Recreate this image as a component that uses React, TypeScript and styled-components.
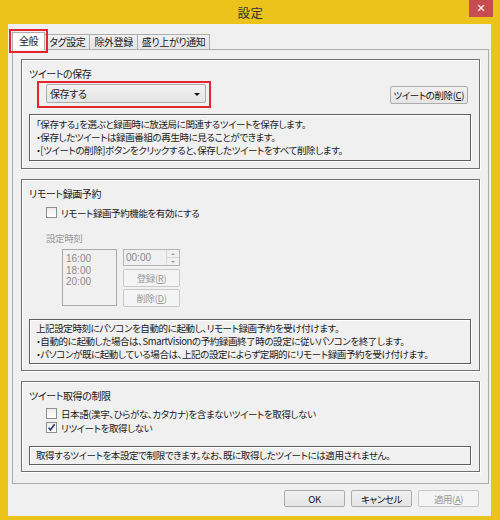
import React from 'react';
import styled, { createGlobalStyle, css } from 'styled-components';

const GlobalStyle = createGlobalStyle`
  html, body {
    margin: 0;
    padding: 0;
    background: #ffffff;
  }
  body {
    font-family: "Noto Sans CJK JP", "Noto Sans", "Liberation Sans", sans-serif;
    font-size: 9.5px;
    letter-spacing: -0.4px;
    font-feature-settings: "palt";
    color: #1a1a1a;
  }
`;

const RED = '#e2262b';

const Window = styled.div`
  width: 500px;
  height: 520px;
  box-sizing: border-box;
  background: #ebc31a;
  padding: 0 9px 7px 8px;
  display: flex;
  flex-direction: column;
`;

const TitleBar = styled.div`
  height: 24px;
  display: grid;
  grid-template-columns: 1fr auto 1fr;
  align-items: start;
  margin-right: -2px;
`;

const Title = styled.div`
  font-size: 12.5px;
  line-height: 26px;
  color: #333;
  letter-spacing: 0.5px;
`;

const CloseButton = styled.div`
  justify-self: end;
  width: 24px;
  height: 17px;
  background: #c74c4f;
  color: #fff;
  display: flex;
  align-items: center;
  justify-content: center;
  font-family: "DejaVu Sans", sans-serif;
  font-size: 11px;
  font-weight: bold;
  letter-spacing: 0;
`;

const Client = styled.div`
  flex: 1;
  background: #f0f0f0;
  padding: 0 2px 9px 4px;
  display: flex;
  flex-direction: column;
`;

const TabStrip = styled.div`
  height: 25px;
  display: flex;
  align-items: flex-end;
  padding-left: 1px;
`;

const Tab = styled.div<{ $active?: boolean; $marked?: boolean }>`
  height: 14px;
  line-height: 14px;
  padding: 0 4px;
  border: 1px solid #acacac;
  border-bottom: none;
  background: linear-gradient(#f0f0f0, #e5e5e5);
  margin-left: -1px;
  font-size: 10px;
  white-space: nowrap;
  ${(p) =>
    p.$active &&
    css`
      height: 17px;
      line-height: 16px;
      background: #ffffff;
      margin-bottom: -1px;
      position: relative;
      z-index: 1;
      padding: 0 6px;
    `}
  ${(p) =>
    p.$marked &&
    css`
      outline: 2px solid ${RED};
      outline-offset: 1px;
    `}
`;

const TabPanel = styled.div`
  flex: 1;
  border: 1px solid #acacac;
  background: #f0f0f0;
  padding: 9px 8px 11px 8px;
  display: flex;
  flex-direction: column;
  gap: 10px;
`;

const Group = styled.div<{ $bottom?: number }>`
  border: 1px solid #6f6f6f;
  box-shadow: 1px 1px 0 #ffffff, inset 1px 1px 0 #ffffff;
  padding: 7px 8px ${(p) => p.$bottom ?? 6}px 7px;
  display: flex;
  flex-direction: column;
`;

const GroupTitle = styled.div`
  line-height: 13px;
  height: 13px;
  font-size: 10px;
`;

const Row = styled.div<{ $indent?: number; $top?: number }>`
  display: flex;
  align-items: center;
  margin-left: ${(p) => p.$indent ?? 0}px;
  margin-top: ${(p) => p.$top ?? 0}px;
`;

const Highlight = styled.div`
  border: 2px solid ${RED};
  padding: 1px 3px 3px 7px;
  display: flex;
`;

const Combo = styled.div`
  width: 150px;
  height: 17px;
  border: 1px solid #acacac;
  border-radius: 2px;
  background: linear-gradient(#f2f2f2, #e4e4e4);
  display: flex;
  align-items: center;
  justify-content: space-between;
  padding: 0 5px 0 3px;
  box-sizing: content-box;
  font-size: 10px;
`;

const ComboArrow = styled.div`
  width: 0;
  height: 0;
  border-left: 3px solid transparent;
  border-right: 3px solid transparent;
  border-top: 3px solid #111;
  margin-top: 1px;
`;

const Button = styled.div<{ $disabled?: boolean; $width?: number }>`
  width: ${(p) => (p.$width ? `${p.$width}px` : 'auto')};
  height: 16px;
  padding: 0 ${(p) => (p.$width ? 0 : 3)}px;
  border: 1px solid #acacac;
  border-radius: 2px;
  background: linear-gradient(#f0f0f0, #e5e5e5);
  display: flex;
  align-items: center;
  justify-content: center;
  white-space: nowrap;
  color: #111;
  ${(p) =>
    p.$disabled &&
    css`
      border-color: #c9c9c9;
      background: #f4f4f4;
      color: #9a9a9a;
    `}
`;

const FooterButton = styled(Button)`
  height: 15px;
`;

const Key = styled.span`
  text-decoration: underline;
  text-underline-offset: 1px;
`;

const InfoBox = styled.div<{ $top?: number; $pad?: number }>`
  margin-top: ${(p) => p.$top ?? 0}px;
  border: 1px solid #5e5e5e;
  box-shadow: inset 1px 1px 0 #ffffff, 1px 1px 0 #ffffff;
  padding: ${(p) => p.$pad ?? 2}px 6px;
  line-height: 13px;
  white-space: nowrap;
`;

const CheckRow = styled.label<{ $top?: number }>`
  display: flex;
  align-items: center;
  gap: 4px;
  margin-left: 17px;
  margin-top: ${(p) => p.$top ?? 0}px;
  height: 13px;
`;

const CheckBox = styled.span`
  width: 9px;
  height: 9px;
  border: 1px solid #8e8f8f;
  background: linear-gradient(#ededed, #ffffff);
  display: flex;
  align-items: center;
  justify-content: center;
`;

const Disabled = styled.div<{ $indent?: number; $top?: number }>`
  color: #9a9a9a;
  margin-left: ${(p) => p.$indent ?? 0}px;
  margin-top: ${(p) => p.$top ?? 0}px;
  line-height: 13px;
`;

const TimeArea = styled.div`
  display: flex;
  gap: 6px;
  margin-left: 33px;
  margin-top: 4px;
  align-items: flex-start;
`;

const ListBox = styled.div`
  width: 55px;
  height: 57px;
  border: 1px solid #a9a9a9;
  padding: 3px 0 0 3px;
  box-sizing: border-box;
  display: flex;
  flex-direction: column;
`;

const ListItem = styled.div`
  height: 11.5px;
  line-height: 11.5px;
  color: #8a8a8a;
  font-size: 10px;
  letter-spacing: 0;
  font-family: "Liberation Sans", sans-serif;
`;

const SideColumn = styled.div`
  display: flex;
  flex-direction: column;
  gap: 2px;
  width: 57px;
`;

const Spin = styled.div`
  height: 15px;
  border: 1px solid #b5b5b5;
  display: flex;
  align-items: stretch;
  margin-bottom: 1px;
  width: 55px;
`;

const SpinText = styled.div`
  flex: 1;
  color: #8a8a8a;
  font-family: "Liberation Sans", sans-serif;
  font-size: 10px;
  letter-spacing: 0;
  line-height: 15px;
  padding-left: 2px;
`;

const SpinArrows = styled.div`
  width: 12px;
  display: flex;
  flex-direction: column;
  border-left: 1px solid #d6d6d6;
`;

const SpinHalf = styled.div<{ $down?: boolean }>`
  flex: 1;
  display: flex;
  align-items: center;
  justify-content: center;
  border-top: ${(p) => (p.$down ? '1px solid #d6d6d6' : 'none')};
  &::after {
    content: '';
    width: 0;
    height: 0;
    border-left: 2px solid transparent;
    border-right: 2px solid transparent;
    ${(p) =>
      p.$down
        ? 'border-top: 2px solid #9a9a9a;'
        : 'border-bottom: 2px solid #9a9a9a;'}
  }
`;

const Footer = styled.div`
  display: flex;
  justify-content: flex-end;
  gap: 6px;
  padding: 6px 10px 0 0;
`;

const Spacer = styled.div`
  flex: 1;
`;

const Check = () => (
  <svg width="9" height="9" viewBox="0 0 9 9">
    <path d="M1.6 4.6 L3.4 7 L7.6 1.2" fill="none" stroke="#1c2f6b" strokeWidth="1.5" />
  </svg>
);

const times = ['16:00', '18:00', '20:00'];

const App: React.FC = () => {
  return (
    <>
      <GlobalStyle />
      <Window>
        <TitleBar>
          <span />
          <Title>設定</Title>
          <CloseButton>✕</CloseButton>
        </TitleBar>
        <Client>
          <TabStrip>
            <Tab $active $marked>全般</Tab>
            <Tab>タグ設定</Tab>
            <Tab>除外登録</Tab>
            <Tab>盛り上がり通知</Tab>
          </TabStrip>
          <TabPanel>
            <Group $bottom={7}>
              <GroupTitle>ツイートの保存</GroupTitle>
              <Row $indent={8} $top={1}>
                <Highlight>
                  <Combo>
                    <span>保存する</span>
                    <ComboArrow />
                  </Combo>
                </Highlight>
                <Spacer />
                <Button style={{ marginRight: 3 }}>
                  ツイートの削除(<Key>C</Key>)
                </Button>
              </Row>
              <InfoBox $top={6} $pad={3}>
                「保存する」を選ぶと録画時に放送局に関連するツイートを保存します。
                <br />
                ・保存したツイートは録画番組の再生時に見ることができます。
                <br />
                ・[ツイートの削除]ボタンをクリックすると、保存したツイートをすべて削除します。
              </InfoBox>
            </Group>

            <Group>
              <GroupTitle>リモート録画予約</GroupTitle>
              <CheckRow $top={6}>
                <CheckBox />
                リモート録画予約機能を有効にする
              </CheckRow>
              <Disabled $indent={17} $top={13}>設定時刻</Disabled>
              <TimeArea>
                <ListBox>
                  {times.map((t) => (
                    <ListItem key={t}>{t}</ListItem>
                  ))}
                </ListBox>
                <SideColumn>
                  <Spin>
                    <SpinText>00:00</SpinText>
                    <SpinArrows>
                      <SpinHalf />
                      <SpinHalf $down />
                    </SpinArrows>
                  </Spin>
                  <Button $disabled $width={55}>
                    登録(<Key>R</Key>)
                  </Button>
                  <Button $disabled $width={55}>
                    削除(<Key>D</Key>)
                  </Button>
                </SideColumn>
              </TimeArea>
              <InfoBox $top={12}>
                上記設定時刻にパソコンを自動的に起動し、リモート録画予約を受け付けます。
                <br />
                ・自動的に起動した場合は、SmartVisionの予約録画終了時の設定に従いパソコンを終了します。
                <br />
                ・パソコンが既に起動している場合は、上記の設定によらず定期的にリモート録画予約を受け付けます。
              </InfoBox>
            </Group>

            <Group>
              <GroupTitle>ツイート取得の制限</GroupTitle>
              <CheckRow $top={5}>
                <CheckBox />
                日本語(漢字、ひらがな、カタカナ)を含まないツイートを取得しない
              </CheckRow>
              <CheckRow $top={1}>
                <CheckBox>
                  <Check />
                </CheckBox>
                リツイートを取得しない
              </CheckRow>
              <InfoBox $top={12}>
                取得するツイートを本設定で制限できます。なお、既に取得したツイートには適用されません。
              </InfoBox>
            </Group>
          </TabPanel>
          <Footer>
            <FooterButton $width={59}>OK</FooterButton>
            <FooterButton $width={59}>キャンセル</FooterButton>
            <FooterButton $width={59} $disabled>
              適用(<Key>A</Key>)
            </FooterButton>
          </Footer>
        </Client>
      </Window>
    </>
  );
};

export default App;
